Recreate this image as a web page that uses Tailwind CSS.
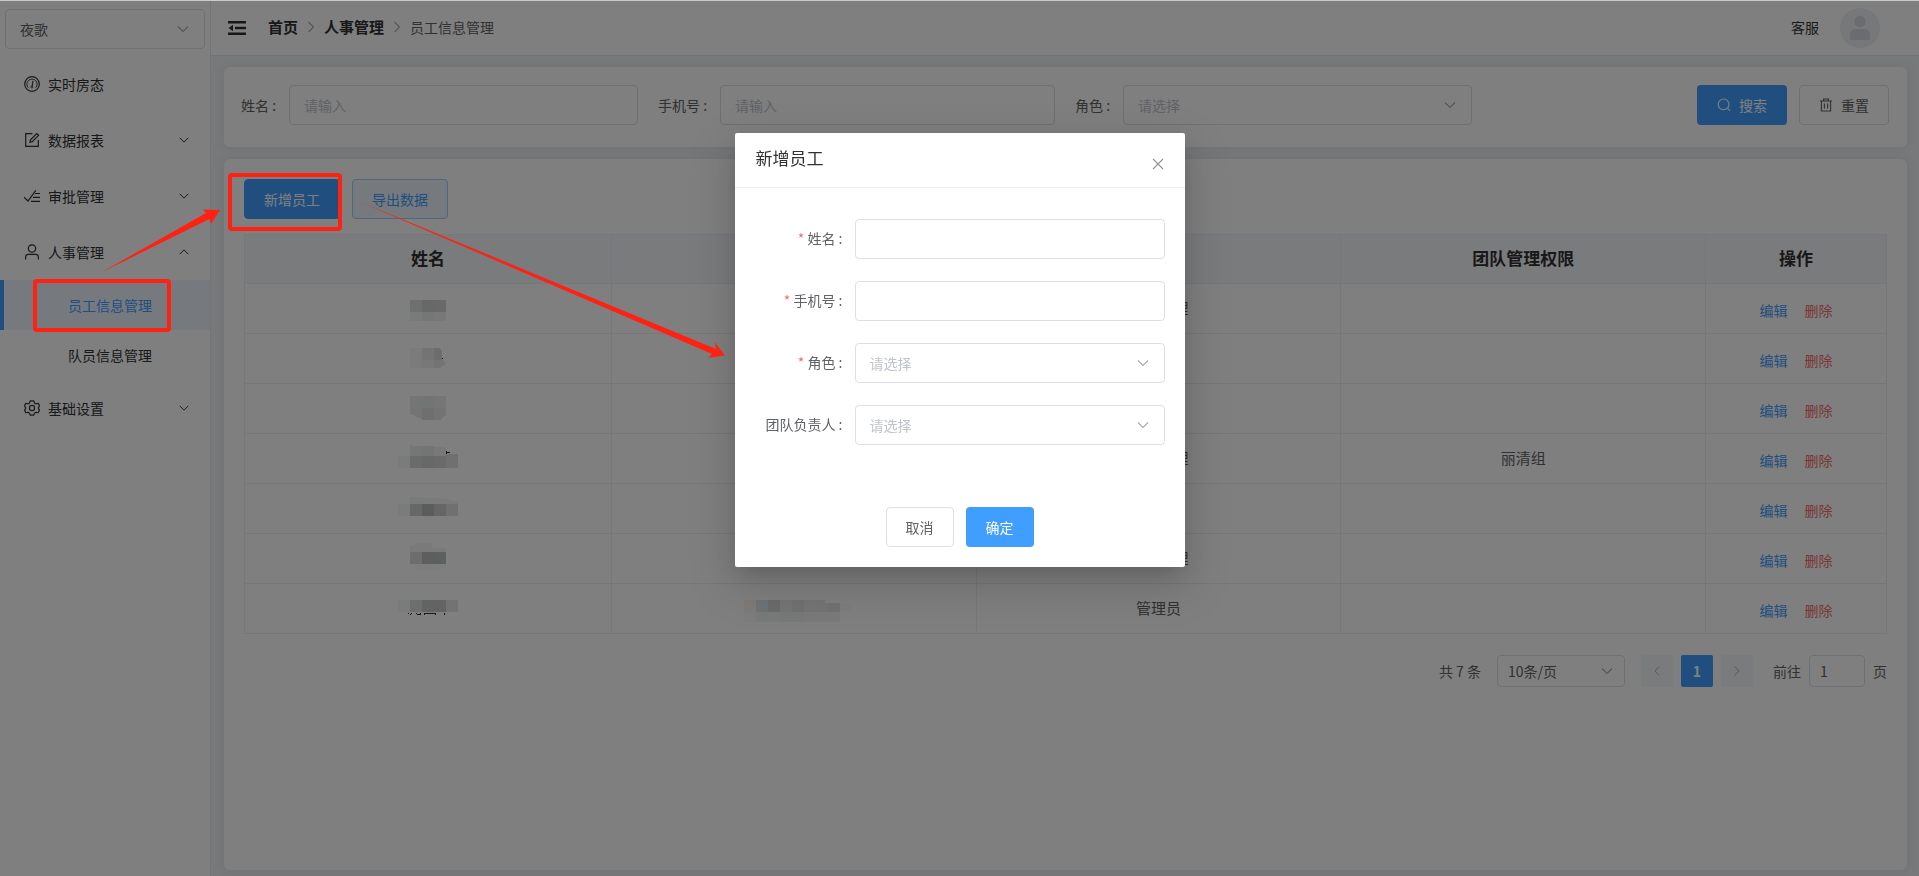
<!DOCTYPE html>
<html lang="zh-CN">
<head>
<meta charset="utf-8">
<title>员工信息管理</title>
<script src="https://cdn.jsdelivr.net/npm/@tailwindcss/browser@4"></script>
</head>
<body class="font-['Noto_Sans_CJK_SC','Noto_Sans',sans-serif] text-sm text-[#606266] bg-[#f0f2f5]">

<svg class="hidden" aria-hidden="true">
  <symbol id="down" viewBox="0 0 14 14"><path d="M2 4.5 7 9.5 12 4.5" fill="none" stroke="currentColor" stroke-width="1.1"/></symbol>
  <symbol id="up" viewBox="0 0 14 14"><path d="M2 9.5 7 4.5 12 9.5" fill="none" stroke="currentColor" stroke-width="1.1"/></symbol>
  <symbol id="right" viewBox="0 0 14 14"><path d="M4.5 2 9.5 7 4.5 12" fill="none" stroke="currentColor" stroke-width="1.1"/></symbol>
  <symbol id="left" viewBox="0 0 14 14"><path d="M9.5 2 4.5 7 9.5 12" fill="none" stroke="currentColor" stroke-width="1.1"/></symbol>
</svg>

<div class="flex min-h-screen border-t border-[#c9c9c9]">
  <aside class="w-[211px] shrink-0 border-r border-[#e6e8ec] bg-white">
    <div class="relative mx-[5px] mt-2">
      <select aria-label="门店" class="h-10 w-full appearance-none rounded border border-[#dcdfe6] bg-white px-[14px] text-[#606266]"><option>夜歌</option></select>
      <svg class="pointer-events-none absolute right-[15px] top-[13px] size-[14px] text-[#a8abb2]"><use href="#down"/></svg>
    </div>
    <nav class="mt-[7px] text-[#303133]">
      <a href="#" class="flex h-14 items-center gap-2 pl-6 pr-5">
        <svg class="size-4" viewBox="0 0 16 16" fill="none" stroke="currentColor"><circle cx="8" cy="8" r="7.3" stroke-width="1.2"/><path d="M4.2 11.6A5.1 5.1 0 1 1 11.8 11.6" stroke-width=".9"/><path d="M9 4.8 8.2 10" stroke-width="1.1"/><circle cx="7.9" cy="11" r="1" stroke-width=".9"/></svg>
        <span>实时房态</span>
      </a>
      <a href="#" class="flex h-14 items-center gap-2 pl-6 pr-5">
        <svg class="size-4" viewBox="0 0 16 16" fill="none" stroke="currentColor" stroke-width="1.2"><path d="M8.5 1.7H1.7v12.6h12.6V8"/><path d="M6 10.2 6.5 7.8 12.8 1.5 14.6 3.3 8.3 9.6Z"/></svg>
        <span>数据报表</span><svg class="ml-auto size-3"><use href="#down"/></svg>
      </a>
      <a href="#" class="flex h-14 items-center gap-2 pl-6 pr-5">
        <svg class="size-4" viewBox="0 0 16 16" fill="none" stroke="currentColor" stroke-width="1.2"><path d="M0 9.3 4 13 11.8 2.4"/><path d="M11 5.5H16M9 9.3H16M7 13.3H16"/></svg>
        <span>审批管理</span><svg class="ml-auto size-3"><use href="#down"/></svg>
      </a>
      <a href="#" class="flex h-14 items-center gap-2 pl-6 pr-5">
        <svg class="size-4" viewBox="0 0 16 16" fill="none" stroke="currentColor" stroke-width="1.2"><circle cx="8" cy="4.5" r="3.7"/><path d="M1.6 15.5V13Q1.6 10.4 4.2 10.4H11.8Q14.4 10.4 14.4 13V15.5"/></svg>
        <span>人事管理</span><svg class="ml-auto size-3"><use href="#up"/></svg>
      </a>
      <a href="#" class="flex h-[50px] items-center border-l-4 border-[#409eff] bg-[#ecf5ff] pl-16 text-[#409eff]">员工信息管理</a>
      <a href="#" class="flex h-[50px] items-center pl-[68px]">队员信息管理</a>
      <a href="#" class="flex h-14 items-center gap-2 pl-6 pr-5">
        <svg class="size-4" viewBox="0 0 16 16" fill="none" stroke="currentColor" stroke-width="1.2" stroke-linejoin="round"><path d="M6.2 .8H9.8L10.4 2.9 12.2 3.9 14.2 3.3 15.6 6.1 14.3 7.6V8.6L15.6 10 14.1 12.8 12.1 12.2 10.4 13.2 9.8 15.2H6.2L5.6 13.2 3.9 12.2 1.9 12.8 .4 10 1.7 8.6V7.6L.4 6.1 1.8 3.3 3.8 3.9 5.6 2.9Z"/><circle cx="8" cy="8" r="2.6"/></svg>
        <span>基础设置</span><svg class="ml-auto size-3"><use href="#down"/></svg>
      </a>
    </nav>
  </aside>

  <div class="flex min-w-0 flex-1 flex-col">
    <header class="flex h-[55px] items-center border-b border-[#e4e7ed] bg-white pl-[17px] pr-[39px]">
      <button aria-label="收起菜单" class="text-[#303133]"><svg class="h-[14px] w-[18px]" viewBox="0 0 18 14" fill="currentColor"><path d="M0 0H18V2.4H0ZM7 5.8H18V8.2H7ZM0 11.6H18V14H0ZM5 3.8V10.2L.6 7Z"/></svg></button>
      <nav class="ml-[22px] flex items-center pb-[2px]">
        <a href="#" class="text-[15px] font-bold text-[#303133]">首页</a>
        <svg class="mx-[6px] size-[14px] text-[#a8abb2]"><use href="#right"/></svg>
        <a href="#" class="text-[15px] font-bold text-[#303133]">人事管理</a>
        <svg class="mx-[6px] size-[14px] text-[#a8abb2]"><use href="#right"/></svg>
        <span>员工信息管理</span>
      </nav>
      <span class="ml-auto pb-[2px] text-[#303133]">客服</span>
      <svg class="ml-[21px] size-10" viewBox="0 0 40 40"><circle cx="20" cy="20" r="20" fill="#eef0f3"/><g fill="#d5d9df"><circle cx="20" cy="13.5" r="5.7"/><path d="M10 32V27Q10 21 16 21H24Q30 21 30 27V32Z"/></g></svg>
    </header>

    <main class="flex flex-1 flex-col gap-3 pt-[11px] pr-3 pb-[6px] pl-[13px]">
      <form class="grid grid-cols-4 gap-5 rounded-md bg-white pl-[17px] pr-[18px] pt-[18px] pb-[22px] shadow-[0_0_12px_rgba(0,0,0,0.08)]">
        <div class="flex items-center"><label for="q1" class="shrink-0 pr-[13px]">姓名 :</label><input id="q1" placeholder="请输入" class="h-10 w-full min-w-0 rounded border border-[#dcdfe6] px-[14px] placeholder:text-[#c0c4cc]"></div>
        <div class="flex items-center"><label for="q2" class="shrink-0 pr-[13px]">手机号 :</label><input id="q2" placeholder="请输入" class="h-10 w-full min-w-0 rounded border border-[#dcdfe6] px-[14px] placeholder:text-[#c0c4cc]"></div>
        <div class="flex items-center"><label for="q3" class="shrink-0 pr-[13px]">角色 :</label>
          <div class="relative flex-1"><select id="q3" class="h-10 w-full appearance-none rounded border border-[#dcdfe6] bg-white px-[14px] text-[#c0c4cc]"><option>请选择</option></select><svg class="pointer-events-none absolute right-[15px] top-[13px] size-[14px] text-[#a8abb2]"><use href="#down"/></svg></div></div>
        <div class="flex items-center justify-end gap-3">
          <button type="button" class="flex h-10 w-[90px] items-center justify-center gap-2 rounded bg-[#409eff] text-white"><svg class="size-[14px]" viewBox="0 0 14 14" fill="none" stroke="currentColor" stroke-width="1.1"><circle cx="6.6" cy="6.4" r="5.4"/><path d="M10.4 10.2 13 12.8"/></svg>搜索</button>
          <button type="button" class="flex h-10 w-[90px] items-center justify-center gap-2 rounded border border-[#dcdfe6] bg-white"><svg class="size-[14px]" viewBox="0 0 14 14" fill="none" stroke="currentColor" stroke-width="1.1"><path d="M1 3H13M4.6 3V1H9.4V3M2.4 3V13H11.6V3M5.4 5.4V10.4M8.6 5.4V10.4"/></svg>重置</button>
        </div>
      </form>

      <section class="flex-1 rounded-md bg-white p-5 shadow-[0_0_12px_rgba(0,0,0,0.08)]">
        <div class="flex gap-3">
          <button class="h-10 rounded border border-[#409eff] bg-[#409eff] px-[19px] text-white">新增员工</button>
          <button class="h-10 rounded border border-[#a0cfff] bg-[#ecf5ff] px-[19px] text-[#409eff]">导出数据</button>
        </div>
        <table class="mt-[15px] w-full table-fixed border-collapse text-center text-[15px] [&_td]:border [&_td]:border-[#ebeef5] [&_td]:px-0 [&_td]:pt-0 [&_td]:pb-[2px] [&_th]:border [&_th]:border-[#ebeef5] [&_th]:pb-[2px]">
          <colgroup><col class="w-[367px]"><col><col><col><col class="w-[181px]"></colgroup>
          <thead><tr class="h-[49px] bg-[#f5f7fa] text-[17px] text-[#303133]"><th>姓名</th><th>手机号</th><th>角色</th><th>团队管理权限</th><th>操作</th></tr></thead>
          <tbody>
            <tr class="h-[50px]"><td><svg class="mx-auto h-[46px] w-[60px]" viewBox="396 285 60 46" shape-rendering="crispEdges"><path fill="#dce0de" d="M408 300h12v12h-12z"/><path fill="#d0d0d0" d="M420 300h12v12h-12z"/><path fill="#d3d3d3" d="M432 300h12v12h-12z"/><path fill="#f2f6f4" d="M408 312h12v9h-12z"/><path fill="#eaefec" d="M420 312h12v9h-12z"/><path fill="#f1f1f1" d="M432 312h12v9h-12z"/></svg></td><td></td><td>部门经理</td><td></td>
              <td><div class="flex justify-center gap-[17px] pt-[5px] text-sm"><a href="#" class="text-[#409eff]">编辑</a><a href="#" class="text-[#f56c6c]">删除</a></div></td></tr>
            <tr class="h-[50px]"><td><svg class="mx-auto h-[46px] w-[60px]" viewBox="396 335 60 46" shape-rendering="crispEdges"><path fill="#f4f6f4" d="M408 348h12v20h-12z"/><path fill="#e8e8e8" d="M420 348h12v12h-12z"/><path fill="#d8dcda" d="M432 348h6l2 4v8h-8z"/><path fill="#ecf3ee" d="M420 360h12v8h-12z"/><path fill="#e8e8e8" d="M432 360h8l4 4-6 4h-6z"/><path fill="#303133" d="M440 358h1v1h-1z"/></svg></td><td></td><td>管理员</td><td></td>
              <td><div class="flex justify-center gap-[17px] pt-[5px] text-sm"><a href="#" class="text-[#409eff]">编辑</a><a href="#" class="text-[#f56c6c]">删除</a></div></td></tr>
            <tr class="h-[50px]"><td><svg class="mx-auto h-[46px] w-[60px]" viewBox="396 385 60 46" shape-rendering="crispEdges"><path fill="#e8eaea" d="M408 396h12v12h-12z"/><path fill="#e4ebe8" d="M420 396h12v12h-12z"/><path fill="#ececec" d="M432 396h12v12h-12z"/><path fill="#e8e8e8" d="M408 408h12v11l-12-5z"/><path fill="#dedede" d="M420 408h12v12h-12z"/><path fill="#e6e6e6" d="M432 408h12v6l-6 6h-6z"/></svg></td><td></td><td>管理员</td><td></td>
              <td><div class="flex justify-center gap-[17px] pt-[5px] text-sm"><a href="#" class="text-[#409eff]">编辑</a><a href="#" class="text-[#f56c6c]">删除</a></div></td></tr>
            <tr class="h-[50px]"><td><svg class="mx-auto h-[46px] w-[60px]" viewBox="396 435 60 46" shape-rendering="crispEdges"><path fill="#e6eeec" d="M408 444l3 2h9v10h-12z"/><path fill="#e8e8e8" d="M420 446h12v10h-12z"/><path fill="#f2f2f2" d="M432 447h12v9h-12z"/><path fill="#f7f7f7" d="M396 456h12v12h-12z"/><path fill="#d6d6d6" d="M408 456h12v12h-12z"/><path fill="#d0d0d0" d="M420 456h12v12h-12z"/><path fill="#d5d5d5" d="M432 456h12v12h-12z"/><path fill="#e0e0e0" d="M444 454h12v14h-12z"/><path fill="#303133" d="M444 451h1v3h-1zM445 452h3v1h-3z"/></svg></td><td></td><td>部门经理</td><td>丽清组</td>
              <td><div class="flex justify-center gap-[17px] pt-[5px] text-sm"><a href="#" class="text-[#409eff]">编辑</a><a href="#" class="text-[#f56c6c]">删除</a></div></td></tr>
            <tr class="h-[50px]"><td><svg class="mx-auto h-[46px] w-[60px]" viewBox="396 485 60 46" shape-rendering="crispEdges"><path fill="#f4f4f4" d="M408 497l24 1 12 1 12 3v2h-48z"/><path fill="#f7f7f7" d="M396 504h12v12h-12z"/><path fill="#c8d0cc" d="M408 504h12v12h-12z"/><path fill="#b8b8b8" d="M420 504h12v12h-12z"/><path fill="#cacaca" d="M432 504h12v12h-12z"/><path fill="#e0e0e0" d="M444 504h12v12h-12z"/></svg></td><td></td><td>管理员</td><td></td>
              <td><div class="flex justify-center gap-[17px] pt-[5px] text-sm"><a href="#" class="text-[#409eff]">编辑</a><a href="#" class="text-[#f56c6c]">删除</a></div></td></tr>
            <tr class="h-[50px]"><td><svg class="mx-auto h-[46px] w-[60px]" viewBox="396 535 60 46" shape-rendering="crispEdges"><path fill="#f5f5f5" d="M408 546l8-3h14v5h14v4h-36z"/><path fill="#d6dcd8" d="M408 552h12v12h-12z"/><path fill="#bcbcbc" d="M420 552h12v12h-12z"/><path fill="#b8c0bc" d="M432 552h12v12h-12z"/><path fill="#fafafa" d="M408 564h36v5h-36z"/></svg></td><td></td><td>部门经理</td><td></td>
              <td><div class="flex justify-center gap-[17px] pt-[5px] text-sm"><a href="#" class="text-[#409eff]">编辑</a><a href="#" class="text-[#f56c6c]">删除</a></div></td></tr>
            <tr class="h-[50px]"><td><svg class="mx-auto h-[46px] w-[60px]" viewBox="396 585 60 46" shape-rendering="crispEdges"><path fill="#f7f7f7" d="M396 600h12v12h-12z"/><path fill="#d6deda" d="M408 600h12v12h-12z"/><path fill="#c6c6c6" d="M420 600h24v12h-24z"/><path fill="#e6e6e6" d="M444 600h12v12h-12z"/><path fill="#303133" d="M406 613h1v1h-1zM409 613h1v1h-1zM408 614h1v1h-1zM414 613h1v1h-1zM415 614h4v1h-4zM418 613h1v1h-1zM422 613h12v1h-12zM422 614h1v1h-1zM433 614h1v1h-1zM442 613h1v2h-1z"/></svg></td>
              <td><svg class="mx-auto h-[46px] w-[120px]" viewBox="734 585 120 46" shape-rendering="crispEdges"><path fill="#faf4ee" d="M744 600h12v12h-12z"/><path fill="#e0e6ec" d="M756 600h12v12h-12z"/><path fill="#d6d6d6" d="M768 600h12v12h-12z"/><path fill="#e6eaee" d="M780 600h12v12h-12z"/><path fill="#e2e2e2" d="M792 600h12v12h-12z"/><path fill="#ebebeb" d="M804 600h12v12h-12z"/><path fill="#e6ebe8" d="M816 600h9v3h3v9h-12z"/><path fill="#e4e4e4" d="M828 603h12v9h-12z"/><path fill="#fafafa" d="M744 612h12v10h-12zM840 604h12l3 4-6 3h-9z"/><path fill="#f2f4f5" d="M756 612h36v10h-36z"/><path fill="#eef2f0" d="M780 612h24v10h-24z"/><path fill="#f4f4f4" d="M804 612h36v10h-36z"/></svg></td><td>管理员</td><td></td>
              <td><div class="flex justify-center gap-[17px] pt-[5px] text-sm"><a href="#" class="text-[#409eff]">编辑</a><a href="#" class="text-[#f56c6c]">删除</a></div></td></tr>
          </tbody>
        </table>
        <div class="mt-[21px] flex h-8 items-center justify-end">
          <span>共 7 条</span>
          <div class="relative ml-4 w-32"><select aria-label="每页条数" class="h-8 w-full appearance-none rounded border border-[#dcdfe6] bg-white px-[10px]"><option>10条/页</option></select><svg class="pointer-events-none absolute right-[11px] top-[9px] size-[14px] text-[#a8abb2]"><use href="#down"/></svg></div>
          <button aria-label="上一页" class="ml-4 flex size-8 items-center justify-center rounded-xs bg-[#f5f7fa] text-[#a8abb2]"><svg class="size-3"><use href="#left"/></svg></button>
          <button class="ml-2 size-8 rounded-xs bg-[#409eff] font-bold text-white">1</button>
          <button aria-label="下一页" class="ml-2 flex size-8 items-center justify-center rounded-xs bg-[#f5f7fa] text-[#a8abb2]"><svg class="size-3"><use href="#right"/></svg></button>
          <label for="goto" class="ml-5">前往</label>
          <input id="goto" value="1" class="mx-2 h-8 w-14 rounded border border-[#dcdfe6] px-[10px]">
          <span>页</span>
        </div>
      </section>
    </main>
  </div>
</div>

<div class="fixed inset-x-0 top-px bottom-0 flex items-start justify-center bg-black/50 pt-[132px]">
  <div role="dialog" aria-label="新增员工" class="w-[450px] rounded-xs bg-white shadow-[0_16px_48px_16px_rgba(0,0,0,0.08),0_12px_32px_rgba(0,0,0,0.12),0_8px_16px_-8px_rgba(0,0,0,0.16)]">
    <div class="flex h-[55px] justify-between border-b border-[#ebeef5] px-[21px]">
      <h2 class="pt-3 text-[17px] leading-[26px] text-[#303133]">新增员工</h2>
      <button aria-label="关闭" class="mt-[25px] h-3 text-[#909399]"><svg class="size-3" viewBox="0 0 12 12" fill="none" stroke="currentColor" stroke-width="1.1"><path d="M1 1 11 11M11 1 1 11"/></svg></button>
    </div>
    <form class="flex flex-col gap-[22px] px-5 pt-[31px]">
      <div class="flex items-center"><label for="f1" class="w-[100px] pr-3 pb-[2px] text-right"><span class="text-[#f56c6c]">*</span> 姓名 :</label><input id="f1" class="h-10 min-w-0 flex-1 rounded border border-[#dcdfe6] px-[14px]"></div>
      <div class="flex items-center"><label for="f2" class="w-[100px] pr-3 pb-[2px] text-right"><span class="text-[#f56c6c]">*</span> 手机号 :</label><input id="f2" class="h-10 min-w-0 flex-1 rounded border border-[#dcdfe6] px-[14px]"></div>
      <div class="flex items-center"><label for="f3" class="w-[100px] pr-3 pb-[2px] text-right"><span class="text-[#f56c6c]">*</span> 角色 :</label>
        <div class="relative flex-1"><select id="f3" class="h-10 w-full appearance-none rounded border border-[#dcdfe6] bg-white px-[14px] text-[#c0c4cc]"><option>请选择</option></select><svg class="pointer-events-none absolute right-[15px] top-[13px] size-[14px] text-[#a8abb2]"><use href="#down"/></svg></div></div>
      <div class="flex items-center"><label for="f4" class="w-[100px] pr-3 pb-[2px] text-right">团队负责人 :</label>
        <div class="relative flex-1"><select id="f4" class="h-10 w-full appearance-none rounded border border-[#dcdfe6] bg-white px-[14px] text-[#c0c4cc]"><option>请选择</option></select><svg class="pointer-events-none absolute right-[15px] top-[13px] size-[14px] text-[#a8abb2]"><use href="#down"/></svg></div></div>
    </form>
    <div class="flex justify-center gap-3 pt-[62px] pb-5">
      <button class="h-10 w-[68px] rounded border border-[#dcdfe6] bg-white">取消</button>
      <button class="h-10 w-[68px] rounded bg-[#409eff] text-white">确定</button>
    </div>
  </div>
</div>

<!-- Guide annotations: highlight boxes and arrows -->
<svg class="pointer-events-none absolute left-0 top-0 h-[380px] w-[760px]" viewBox="0 0 760 380" fill="#ff2112">
  <rect x="230" y="175" width="110" height="54" rx="2" fill="none" stroke="#ff2112" stroke-width="4"/>
  <rect x="35" y="281" width="134" height="49" rx="2" fill="none" stroke="#ff2112" stroke-width="4"/>
  <path d="M101 272.500 206 213 203 209.500 220 210 211 224 209.500 219Z"/>
  <path d="M357 200.500 716 349 714.500 342 725 355.500 708 358 712 354Z"/>
</svg>
</body>
</html>
